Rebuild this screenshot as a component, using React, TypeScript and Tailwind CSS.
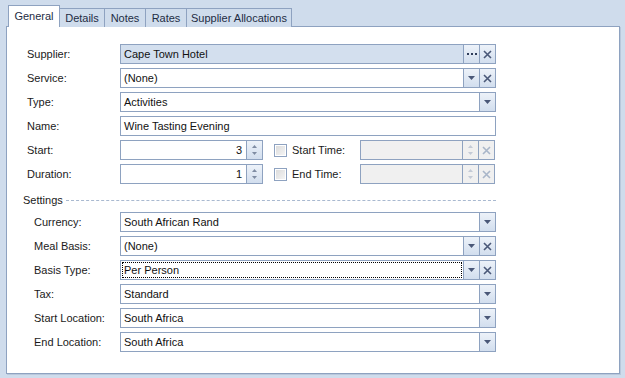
import React from 'react';

const font = { fontFamily: '"Liberation Sans", Arial, sans-serif' };

function Arrow({ disabled }: { disabled?: boolean }) {
  return (
    <svg width="7" height="4" viewBox="0 0 7 4">
      <path d="M0 0h7L3.5 4z" fill={disabled ? '#b5bfcd' : '#4a5878'} />
    </svg>
  );
}

function Cross({ disabled }: { disabled?: boolean }) {
  return (
    <svg width="9" height="9" viewBox="0 0 9 9">
      <path d="M1 1l7 7M8 1l-7 7" stroke={disabled ? '#a9b6c9' : '#4a5878'} strokeWidth="1.6" />
    </svg>
  );
}

function Dots() {
  return (
    <svg width="10" height="2" viewBox="0 0 10 2">
      <rect x="0" y="0" width="2" height="2" fill="#2f3d5a" />
      <rect x="4" y="0" width="2" height="2" fill="#2f3d5a" />
      <rect x="8" y="0" width="2" height="2" fill="#2f3d5a" />
    </svg>
  );
}

function Spin({ disabled }: { disabled?: boolean }) {
  const c = disabled ? '#c3cad6' : '#7f8ca3';
  return (
    <svg width="5" height="12" viewBox="0 0 5 12">
      <path d="M0 4h5L2.5 1z" fill={c} />
      <path d="M0 8h5L2.5 11z" fill={c} />
    </svg>
  );
}

function Btn({ children, disabled }: { children: React.ReactNode; disabled?: boolean }) {
  return (
    <div
      className={`w-[16px] h-full flex items-center justify-center border-l border-[#8ea2c0] ${
        disabled ? 'bg-[#f0f0f0]' : 'bg-gradient-to-b from-[#edf2f9] to-[#d2deee]'
      }`}
    >
      {children}
    </div>
  );
}

type FieldProps = {
  value?: string;
  buttons?: ('arrow' | 'cross' | 'dots' | 'spin')[];
  readOnly?: boolean;
  disabled?: boolean;
  right?: boolean;
  focus?: boolean;
  width?: string;
};

function Field({ value = '', buttons = [], readOnly, disabled, right, focus, width = 'w-[376px]' }: FieldProps) {
  const bg = readOnly ? 'bg-[#d3dfee]' : disabled ? 'bg-[#f0f0f0]' : 'bg-white';
  return (
    <div className={`${width} h-[20px] border border-[#8ea2c0] flex ${bg}`}>
      <div className="flex-1 p-[1px] min-w-0">
        <div
          className={`h-full flex items-center px-[1px] text-[11px] text-[#111] whitespace-nowrap ${right ? 'justify-end pr-[2px]' : ''} ${
            focus ? 'border border-dotted border-black' : 'border border-transparent'
          }`}
        >
          {value}
        </div>
      </div>
      {buttons.map((b, i) => (
        <Btn key={i} disabled={disabled}>
          {b === 'arrow' && <Arrow disabled={disabled} />}
          {b === 'cross' && <Cross disabled={disabled} />}
          {b === 'dots' && <Dots />}
          {b === 'spin' && <Spin disabled={disabled} />}
        </Btn>
      ))}
    </div>
  );
}

function Row({ label, children, indent }: { label: string; children: React.ReactNode; indent?: boolean }) {
  return (
    <div className="flex items-center h-[20px]">
      <div className={`${indent ? 'w-[86px]' : 'w-[93px]'} text-[11px] text-[#1a1a1a] whitespace-nowrap`}>{label}</div>
      {children}
    </div>
  );
}

function Check({ label }: { label: string }) {
  return (
    <div className="flex items-center ml-[11px] w-[86px]">
      <div className="w-[13px] h-[13px] border border-[#8ea2c0] p-[1px] bg-white">
        <div className="w-full h-full bg-gradient-to-br from-[#dcdcdc] to-[#f4f4f4]" />
      </div>
      <span className="ml-[5px] text-[11px] text-[#1a1a1a] whitespace-nowrap">{label}</span>
    </div>
  );
}

export default function App() {
  const tabs = [
    { name: 'Details', w: 'w-[45px]' },
    { name: 'Notes', w: 'w-[41px]' },
    { name: 'Rates', w: 'w-[41px]' },
    { name: 'Supplier Allocations', w: 'w-[105px]' },
  ];
  return (
    <div className="w-[625px] h-[378px] bg-[#cfdcec] pt-[5px] overflow-hidden" style={font}>
      <div className="flex items-end pl-[8px] h-[22px]">
        <div className="w-[52px] h-[22px] bg-white border border-b-0 border-[#8ea2c0] flex items-center justify-center text-[11px] text-[#1e2c44] relative z-10">
          General
        </div>
        {tabs.map((t) => (
          <div
            key={t.name}
            className={`${t.w} h-[19px] border border-l-0 border-b-0 border-[#8ea2c0] bg-[#cfdcec] flex items-center justify-center text-[11px] text-[#1e2c44] whitespace-nowrap`}
          >
            {t.name}
          </div>
        ))}
      </div>
      <div className="ml-[6px] w-[614px] h-[348px] -mt-[1px] bg-white border border-[#8ea2c0] shadow-[1px_1px_0_#b9c8dc] pt-[17px]">
        <div className="pl-[20px] flex flex-col gap-[4px]">
          <Row label="Supplier:">
            <Field value="Cape Town Hotel" readOnly buttons={['dots', 'cross']} />
          </Row>
          <Row label="Service:">
            <Field value="(None)" buttons={['arrow', 'cross']} />
          </Row>
          <Row label="Type:">
            <Field value="Activities" buttons={['arrow']} />
          </Row>
          <Row label="Name:">
            <Field value="Wine Tasting Evening" />
          </Row>
          <Row label="Start:">
            <Field value="3" right width="w-[143px]" buttons={['spin']} />
            <Check label="Start Time:" />
            <Field disabled width="w-[135px]" buttons={['spin', 'cross']} />
          </Row>
          <Row label="Duration:">
            <Field value="1" right width="w-[143px]" buttons={['spin']} />
            <Check label="End Time:" />
            <Field disabled width="w-[135px]" buttons={['spin', 'cross']} />
          </Row>
        </div>
        <div className="pl-[16px] mt-[4px] h-[20px] pt-[4px] flex items-center w-[489px]">
          <span className="text-[11px] text-[#1a1a1a]">Settings</span>
          <div className="flex-1 ml-[3px] border-t border-dashed border-[#a9b9d0]" />
        </div>
        <div className="pl-[27px] mt-[4px] flex flex-col gap-[4px]">
          <Row label="Currency:" indent>
            <Field value="South African Rand" buttons={['arrow']} />
          </Row>
          <Row label="Meal Basis:" indent>
            <Field value="(None)" buttons={['arrow', 'cross']} />
          </Row>
          <Row label="Basis Type:" indent>
            <Field value="Per Person" focus buttons={['arrow', 'cross']} />
          </Row>
          <Row label="Tax:" indent>
            <Field value="Standard" buttons={['arrow']} />
          </Row>
          <Row label="Start Location:" indent>
            <Field value="South Africa" buttons={['arrow']} />
          </Row>
          <Row label="End Location:" indent>
            <Field value="South Africa" buttons={['arrow']} />
          </Row>
        </div>
      </div>
    </div>
  );
}
